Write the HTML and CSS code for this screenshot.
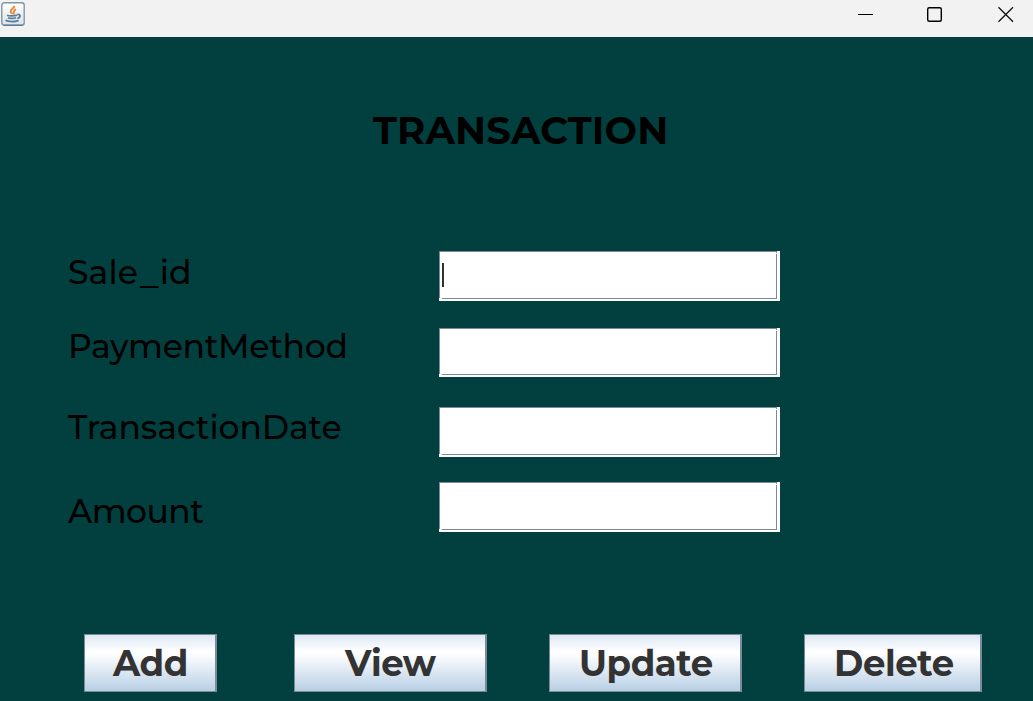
FILE: index.html
```html
<!DOCTYPE html>
<html lang="en">
<head>
<meta charset="utf-8">
<title>Transaction</title>
<link rel="stylesheet" href="styles.css">
</head>
<body>
<div class="window">
  <header class="titlebar">
    <svg class="app-icon" viewBox="0 0 24 24" width="24" height="24" aria-hidden="true">
      <defs>
        <linearGradient id="tile" x1="0" y1="0" x2="0" y2="1">
          <stop offset="0" stop-color="#ffffff"/>
          <stop offset="1" stop-color="#dde3e8"/>
        </linearGradient>
      </defs>
      <rect x=".8" y=".8" width="22.4" height="22.4" rx="2.5" fill="url(#tile)" stroke="#7f96a8" stroke-width="1.4"/>
      <path d="M2.500 23.200H21.500" stroke="#4f6f8b" stroke-width="1"/>
      <path d="M13.300 3.800C13.700 6.500 8.700 7.200 9.700 9.800C10.100 10.900 11.200 11.400 11.300 12.200M15 7.200C11.700 8.400 13.700 10 12.400 12.200" fill="none" stroke="#ed8b35" stroke-width="2"/>
      <path d="M6 13.200C8 14.300 14 14 16 13.200M7 15.700C9 16.700 13.500 16.400 15 15.700M16.200 12.600C20 11.700 20 15.500 16.300 16.300M4.500 18.300C7 20 15.500 20 17.500 18.300" fill="none" stroke="#587e9e" stroke-width="1.800"/>
    </svg>
    <svg class="window-controls" viewBox="0 0 150 24" width="150" height="24" aria-hidden="true">
      <path d="M0 14.500H15" stroke="#000"/>
      <rect x="69.700" y="7.700" width="13.600" height="13.600" rx="1.500" fill="none" stroke="#000" stroke-width="1.400"/>
      <path d="M140.500 7.300L155 21.800M155 7.300L140.500 21.800" stroke="#111" stroke-width="1.300"/>
    </svg>
  </header>
  <main class="content">
    <h1 class="heading">TRANSACTION</h1>
    <form class="form">
      <label class="label sale">Sale<span class="underscore">_</span>id</label>
      <div class="field"><div class="well"><i class="caret"></i></div></div>
      <label class="label payment">PaymentMethod</label>
      <div class="field short"><div class="well"></div></div>
      <label class="label date">TransactionDate</label>
      <div class="field"><div class="well"></div></div>
      <label class="label amount">Amount</label>
      <div class="field"><div class="well"></div></div>
    </form>
    <div class="actions">
      <button class="add">Add</button>
      <button class="view">View</button>
      <button class="update">Update</button>
      <button class="delete">Delete</button>
    </div>
  </main>
</div>
</body>
</html>
```
FILE: styles.css
```css
* { box-sizing: border-box; }
body { margin: 0; font-family: Montserrat, Inter, sans-serif; }
.window { width: 1033px; height: 701px; overflow: hidden; background: #024040; }
.titlebar { height: 37px; background: #f2f2f2; display: flex; justify-content: space-between; padding: 0 25px 0 1px; }
.app-icon { margin-top: 2px; }
.window-controls { overflow: visible; }
.content { height: 664px; }
.heading { margin: 0; padding: 71px 0 0 373px; font-size: 38.5px; letter-spacing: .15px; line-height: 46px; height: 214px; font-weight: 700; color: #000; }
.form { display: grid; grid-template-columns: 371px 341px; grid-template-rows: 77px 79px 75px 152px; padding-left: 68px; }
.label { font-size: 33px; line-height: 40px; font-weight: 500; color: #000; white-space: nowrap; }
.sale { padding-top: 1px; letter-spacing: .1px; }
.underscore { display: inline-block; transform: translateY(2px) scaleX(1.12); margin: 0 2.5px; }
.payment { margin-top: -2px; letter-spacing: -.3px; }
.date { letter-spacing: -.1px; }
.amount { padding-top: 9px; letter-spacing: -.5px; }
.field { height: 50px; background: #fff; }
.short { height: 49px; }
.well { position: relative; width: 338px; height: calc(100% - 2px); border: 1px solid #7a8a99; padding: 11px 2px; }
.well::before, .well::after { content: ""; position: absolute; height: 1px; background: #fff; }
.well::before { left: -1px; bottom: -1px; width: 3px; }
.well::after { right: -1px; top: 1px; width: 1px; }
.caret { display: block; width: 2px; height: 24px; background: #333; }
.actions { display: flex; padding-left: 84px; }
button { height: 58px; padding: 2px 0 0; border: 1px solid #7a8a99; border-right-width: 2px; border-radius: 0; background: linear-gradient(#dde8f3, #fff 30%, #fff 33%, #b8cfe5); font-family: inherit; font-size: 35.5px; letter-spacing: -.4px; line-height: 54px; font-weight: 700; color: #333; text-align: left; }
.add { width: 133px; margin-right: 77px; padding-left: 28px; }
.view { width: 193px; margin-right: 62px; padding-left: 50px; }
.update { width: 193px; margin-right: 62px; padding-left: 29px; }
.delete { width: 178px; padding-left: 29px; }
```
